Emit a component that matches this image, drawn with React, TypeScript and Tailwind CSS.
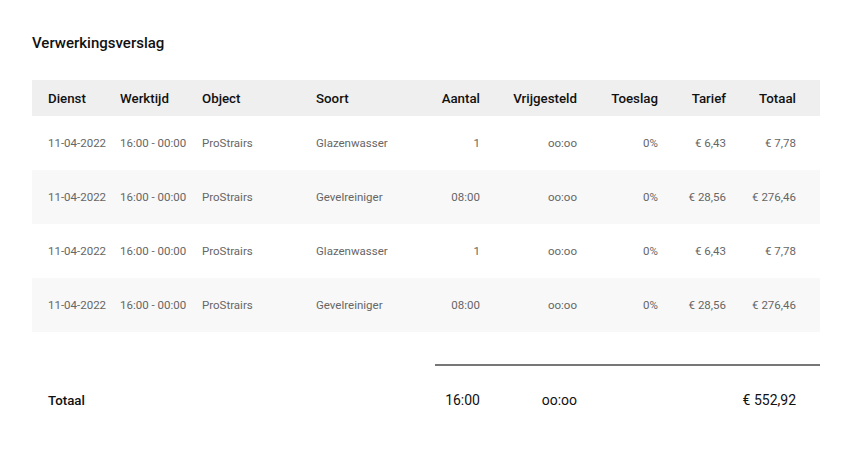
const COLS = "grid grid-cols-[72px_82px_114px_120px_76px_97px_81px_68px_1fr]";

const ROWS = [
  ["11-04-2022", "16:00 - 00:00", "ProStrairs", "Glazenwasser", "1", "oo:oo", "0%", "€ 6,43", "€ 7,78"],
  ["11-04-2022", "16:00 - 00:00", "ProStrairs", "Gevelreiniger", "08:00", "oo:oo", "0%", "€ 28,56", "€ 276,46"],
  ["11-04-2022", "16:00 - 00:00", "ProStrairs", "Glazenwasser", "1", "oo:oo", "0%", "€ 6,43", "€ 7,78"],
  ["11-04-2022", "16:00 - 00:00", "ProStrairs", "Gevelreiniger", "08:00", "oo:oo", "0%", "€ 28,56", "€ 276,46"],
];

const HEAD = ["Dienst", "Werktijd", "Object", "Soort", "Aantal", "Vrijgesteld", "Toeslag", "Tarief", "Totaal"];

function cellClass(i: number) {
  if (i < 4) return "px-4 text-left";
  if (i === 8) return "pr-6 text-right";
  return "pr-4 text-right";
}

export default function App() {
  return (
    <div className="min-h-screen bg-white pl-8 pt-[33px] font-['Roboto',sans-serif] text-[#111]">
      <div className="w-[788px]">
        <h1 className="text-[15px] font-medium leading-5">Verwerkingsverslag</h1>

        <div className="mt-[27px]">
          <div className={`${COLS} h-9 items-center bg-[#efefef] pt-px text-[13.3px] font-medium`}>
            {HEAD.map((h, i) => (
              <div key={h} className={`${cellClass(i)} whitespace-nowrap`}>
                {h}
              </div>
            ))}
          </div>
          {ROWS.map((row, r) => (
            <div
              key={r}
              className={`${COLS} h-[54px] items-center pt-[2px] text-[11.5px] text-[#666] ${r % 2 === 1 ? "bg-[#f8f8f8]" : "bg-white"}`}
            >
              {row.map((c, i) => (
                <div key={i} className={`${cellClass(i)} whitespace-nowrap`}>
                  {c}
                </div>
              ))}
            </div>
          ))}
        </div>

        <div className="mt-8 ml-[403px] h-[2px] bg-[#777]" />

        <div className={`${COLS} mt-[24px] items-center text-[14px]`}>
          <div className="px-4 text-[13.3px] font-medium">Totaal</div>
          <div />
          <div />
          <div />
          <div className="pr-4 text-right whitespace-nowrap">16:00</div>
          <div className="pr-4 text-right whitespace-nowrap">oo:oo</div>
          <div />
          <div />
          <div className="pr-6 text-right whitespace-nowrap">€ 552,92</div>
        </div>
      </div>
    </div>
  );
}
